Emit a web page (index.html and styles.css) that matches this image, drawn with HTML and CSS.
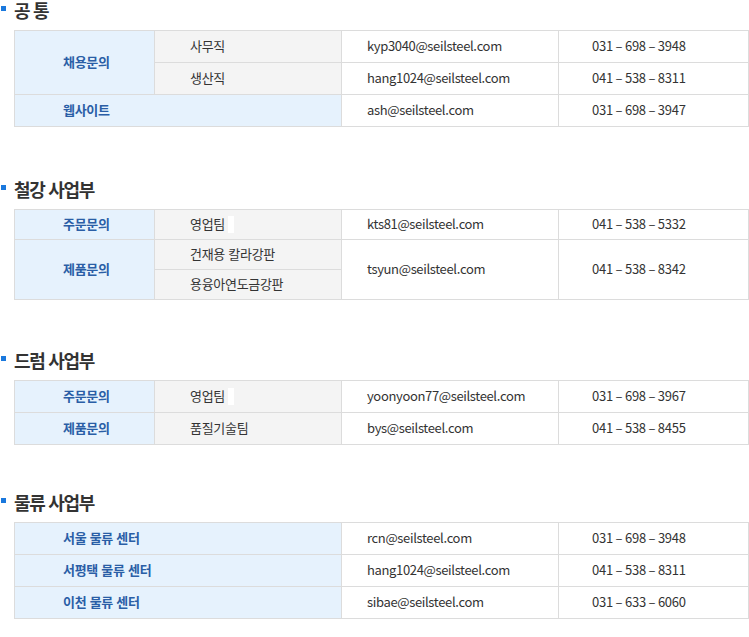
FILE: index.html
```html
<!DOCTYPE html>
<html lang="ko">
<head>
<meta charset="utf-8">
<link rel="stylesheet" href="styles.css">
</head>
<body>
<section class="sec sec-first">
  <h2 class="title"><span class="mark"></span>공 통</h2>
  <table class="tbl">
    <colgroup><col class="c1"><col class="c2"><col class="c3"><col class="c4"></colgroup>
    <tr><th rowspan="2">채용문의</th><td class="sub">사무직</td><td class="mail">kyp3040@seilsteel.com</td><td class="tel">031 – 698 – 3948</td></tr>
    <tr><td class="sub">생산직</td><td class="mail">hang1024@seilsteel.com</td><td class="tel">041 – 538 – 8311</td></tr>
    <tr><th colspan="2">웹사이트</th><td class="mail">ash@seilsteel.com</td><td class="tel">031 – 698 – 3947</td></tr>
  </table>
</section>
<section class="sec sec-2">
  <h2 class="title"><span class="mark"></span>철강 사업부</h2>
  <table class="tbl tbl-tight">
    <colgroup><col class="c1"><col class="c2"><col class="c3"><col class="c4"></colgroup>
    <tr><th>주문문의</th><td class="sub">영업팀<span class="blank"></span></td><td class="mail">kts81@seilsteel.com</td><td class="tel">041 – 538 – 5332</td></tr>
    <tr><th rowspan="2">제품문의</th><td class="sub">건재용 칼라강판</td><td rowspan="2" class="mail">tsyun@seilsteel.com</td><td rowspan="2" class="tel">041 – 538 – 8342</td></tr>
    <tr><td class="sub">용융아연도금강판</td></tr>
  </table>
</section>
<section class="sec sec-3">
  <h2 class="title"><span class="mark"></span>드럼 사업부</h2>
  <table class="tbl">
    <colgroup><col class="c1"><col class="c2"><col class="c3"><col class="c4"></colgroup>
    <tr><th>주문문의</th><td class="sub">영업팀<span class="blank"></span></td><td class="mail">yoonyoon77@seilsteel.com</td><td class="tel">031 – 698 – 3967</td></tr>
    <tr><th>제품문의</th><td class="sub">품질기술팀</td><td class="mail">bys@seilsteel.com</td><td class="tel">041 – 538 – 8455</td></tr>
  </table>
</section>
<section class="sec sec-4">
  <h2 class="title"><span class="mark"></span>물류 사업부</h2>
  <table class="tbl">
    <colgroup><col class="c1"><col class="c2"><col class="c3"><col class="c4"></colgroup>
    <tr><th colspan="2">서울 물류 센터</th><td class="mail">rcn@seilsteel.com</td><td class="tel">031 – 698 – 3948</td></tr>
    <tr><th colspan="2">서평택 물류 센터</th><td class="mail">hang1024@seilsteel.com</td><td class="tel">041 – 538 – 8311</td></tr>
    <tr><th colspan="2">이천 물류 센터</th><td class="mail">sibae@seilsteel.com</td><td class="tel">031 – 633 – 6060</td></tr>
  </table>
</section>
</body>
</html>
```
FILE: styles.css
```css
html, body {
  margin: 0;
  padding: 0;
  background: #fff;
}
body {
  font-family: "Noto Sans CJK KR", "Noto Sans", sans-serif;
  color: #333;
  width: 749px;
}
.sec {
  display: flex;
  flex-direction: column;
}
.sec-2 { margin-top: 52px; }
.sec-3 { margin-top: 50px; }
.sec-4 { margin-top: 47px; }

.title {
  margin: 0 0 9px 0;
  display: flex;
  align-items: flex-start;
  gap: 8px;
  font-size: 18px;
  line-height: 21px;
  font-weight: 700;
  color: #333;
  letter-spacing: -1.3px;
}
.mark {
  width: 5px;
  height: 5px;
  margin: 6px 0 0 1px;
  background: #1a78dd;
  flex: none;
}
.tbl {
  margin-left: 14px;
  width: 734px;
  border-collapse: collapse;
  table-layout: fixed;
  font-size: 13px;
}
.c1 { width: 140px; }
.c2 { width: 187px; }
.c3 { width: 217px; }
.c4 { width: 190px; }
.tbl th, .tbl td {
  border: 1px solid #dcdcdc;
  height: 32px;
  padding: 0 0 1px 25px;
  text-align: left;
  vertical-align: middle;
  box-sizing: border-box;
  line-height: 18px;
  white-space: nowrap;
}
.tbl-tight th, .tbl-tight td { height: 30px; }
.tbl th {
  background: #e6f2fd;
  color: #2a5ea6;
  font-weight: 700;
  padding-left: 48px;
  letter-spacing: -0.3px;
}
.tbl td.sub {
  background: #f4f4f4;
  padding-left: 35px;
  letter-spacing: -0.3px;
}
.tbl td.mail {
  letter-spacing: -0.35px;
}
.tbl td.tel {
  padding-left: 33px;
  letter-spacing: -0.25px;
}
.blank {
  display: inline-block;
  width: 6px;
  height: 17px;
  background: #fff;
  vertical-align: middle;
  margin-left: 3px;
}
```
